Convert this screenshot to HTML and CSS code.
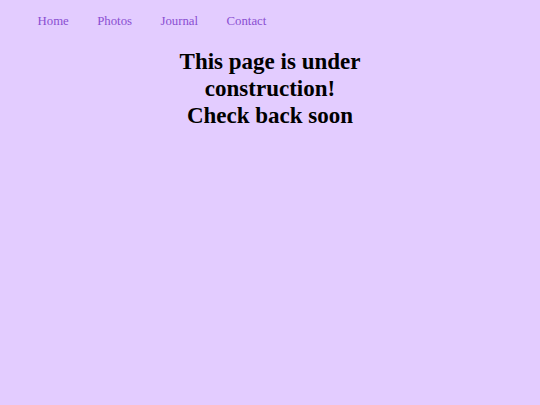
FILE: index.html
```html
<!DOCTYPE html>
<html>
<head>
<meta charset="utf-8">
<link rel="stylesheet" href="styles.css">
</head>
<body>
<nav class="nav">
  <a class="nav-link" href="#">Home</a>
  <a class="nav-link" href="#">Photos</a>
  <a class="nav-link" href="#">Journal</a>
  <a class="nav-link" href="#">Contact</a>
</nav>
<main class="content">
  <h1 class="notice">This page is under construction!<br>Check back soon</h1>
</main>
</body>
</html>
```
FILE: styles.css
```css
html, body {
  margin: 0;
  padding: 0;
  background: #e3ccff;
  font-family: "Liberation Serif", "Times New Roman", serif;
}
.nav {
  display: flex;
  gap: 28.4px;
  padding: 14px 0 0 37.5px;
  font-size: 12.8px;
  line-height: 15px;
}
.nav-link {
  color: #8a4fd2;
  text-decoration: none;
}
.content {
  padding-top: 19px;
}
.notice {
  margin: 0 auto;
  max-width: 200px;
  text-align: center;
  font-size: 23px;
  font-weight: bold;
  line-height: 27px;
  color: #000;
}
```
